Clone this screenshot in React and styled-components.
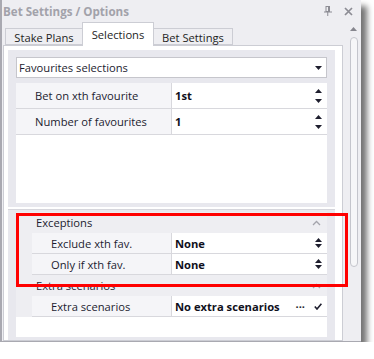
import React from 'react';
import styled, { createGlobalStyle } from 'styled-components';

const Global = createGlobalStyle`
  html, body { margin: 0; padding: 0; background: #ffffff; }
  body { font-family: "Open Sans", "Liberation Sans", sans-serif; font-size: 11.2px; color: #1c1c30; }
  * { box-sizing: border-box; }
`;

const Window = styled.div`
  position: relative;
  width: 361px;
  height: 342px;
  background: #eeeef2;
  border-left: 2px solid #a9a9b1;
  border-bottom: 1px solid #a9a9b1;
  box-shadow: 6px 6px 6px rgba(0, 0, 0, 0.55);
  display: flex;
  flex-direction: column;
`;

const TitleBar = styled.div`
  height: 22px;
  flex: none;
  display: flex;
  align-items: center;
  padding: 0 8px 0 1px;
  gap: 12px;
`;

const Title = styled.div`
  flex: 1;
  font-weight: 700;
  font-size: 11.6px;
  color: #a2a2aa;
  white-space: nowrap;
`;

const Body = styled.div`
  flex: 1;
  display: flex;
  min-height: 0;
`;

const TabControl = styled.div`
  margin-left: 1px;
  width: 340px;
  display: flex;
  flex-direction: column;
`;

const TabStrip = styled.div`
  height: 23px;
  flex: none;
  display: flex;
  align-items: flex-end;
  padding-left: 2px;
  position: relative;
  z-index: 1;
`;

const Tab = styled.div`
  height: ${p => (p.$active ? '24px' : '17px')};
  margin-bottom: ${p => (p.$active ? '-1px' : '0')};
  margin-left: -1px;
  width: ${p => p.$w}px;
  display: flex;
  align-items: center;
  justify-content: center;
  padding-top: ${p => (p.$active ? '0' : '1px')};
  background: ${p => (p.$active ? '#ffffff' : '#eeeef2')};
  border: 1px solid #cccdd4;
  border-bottom: ${p => (p.$active ? 'none' : '1px solid #cccdd4')};
  color: #1e1e1e;
  white-space: nowrap;
  &:first-child { margin-left: 0; }
`;

const TabPane = styled.div`
  flex: 1;
  background: #ffffff;
  border: 1px solid #cccdd4;
  padding: 4px 7px 0 4px;
  display: flex;
  flex-direction: column;
`;

const UpperSection = styled.div`
  background: #e8e8ee;
  padding: 7px 8px 4px 8px;
  display: flex;
  flex-direction: column;
  gap: 5px;
`;

const LowerSection = styled.div`
  flex: 1;
  margin-top: 2px;
  background: #e8e8ee;
  border-top: 1px solid #d6d6dc;
  padding: 2px 8px 3px 8px;
  display: flex;
  flex-direction: column;
`;

const Combo = styled.div`
  height: 21px;
  background: #ffffff;
  border: 1px solid #c6c6cc;
  display: flex;
  align-items: center;
  padding: 0 4px 0 2px;
  justify-content: space-between;
`;

const Grid = styled.div`
  background: #ffffff;
  display: flex;
  flex-direction: column;
  height: ${p => (p.$h ? `${p.$h}px` : 'auto')};
  flex: ${p => (p.$grow ? 1 : 'none')};
`;

const Row = styled.div`
  height: ${p => p.$h}px;
  display: grid;
  grid-template-columns: ${p => (p.$indent ? '16px 140px 1fr' : '156px 1fr')};
  background: #eeeef2;
`;

const LabelCell = styled.div`
  background: #f5f5f8;
  border-right: 1px solid #d8d8dd;
  border-bottom: 1px solid #d8d8dd;
  display: flex;
  align-items: center;
  padding-left: 19px;
  color: #1c1c30;
  white-space: nowrap;
`;

const ValueCell = styled.div`
  background: #ffffff;
  border-bottom: 1px solid #d8d8dd;
  display: flex;
  align-items: center;
  justify-content: space-between;
  padding: 0 5px 0 3px;
  font-weight: 700;
  color: #10101c;
  white-space: nowrap;
`;

const Indent = styled.div`
  background: #eeeef2;
`;

const CategoryRow = styled.div`
  height: 21px;
  background: #eeeef2;
  display: flex;
  align-items: center;
  justify-content: space-between;
  padding: 0 6px 0 20px;
  color: #1c1c30;
`;

const SpinBox = styled.div`
  display: flex;
  flex-direction: column;
  gap: ${p => p.$gap}px;
  align-items: center;
`;

const Trailing = styled.div`
  display: flex;
  align-items: center;
  gap: 9px;
`;

const ScrollBar = styled.div`
  width: 18px;
  flex: none;
  display: flex;
  flex-direction: column;
  align-items: center;
  padding: 5px 0 0 3px;
  gap: 6px;
`;

const Thumb = styled.div`
  width: 8px;
  height: 230px;
  border: 1px solid #c4c5cc;
  border-radius: 4px;
  background: #f6f6f8;
`;

const Highlight = styled.div`
  position: absolute;
  left: 14px;
  top: 213px;
  width: 332px;
  height: 74px;
  border: 3px solid #ff0000;
  pointer-events: none;
`;

const Tri = ({ up, color = '#1e1e2e', w = 7, h = 4 }) => (
  <svg width={w} height={h} viewBox={`0 0 ${w} ${h}`} style={{ display: 'block' }}>
    {up ? (
      <polygon points={`0,${h} ${w},${h} ${w / 2},0`} fill={color} />
    ) : (
      <polygon points={`0,0 ${w},0 ${w / 2},${h}`} fill={color} />
    )}
  </svg>
);

const Spin = ({ gap = 6 }) => (
  <SpinBox $gap={gap}>
    <Tri up />
    <Tri />
  </SpinBox>
);

const Caret = () => (
  <svg width="9" height="6" viewBox="0 0 9 6" style={{ display: 'block' }}>
    <polyline points="1,5 4.5,1.5 8,5" fill="none" stroke="#a4a4ac" strokeWidth="1.3" />
  </svg>
);

const Pin = () => (
  <svg width="8" height="10" viewBox="0 0 8 10" style={{ display: 'block' }}>
    <rect x="2" y="0.5" width="3.5" height="5" fill="none" stroke="#8c8c94" strokeWidth="1" />
    <rect x="4" y="0.5" width="1.5" height="5" fill="#8c8c94" />
    <line x1="0" y1="6" x2="8" y2="6" stroke="#8c8c94" strokeWidth="1" />
    <line x1="3.75" y1="6" x2="3.75" y2="10" stroke="#8c8c94" strokeWidth="1" />
  </svg>
);

const Close = () => (
  <svg width="9" height="9" viewBox="0 0 9 9" style={{ display: 'block' }}>
    <path d="M1 1 L8 8 M8 1 L1 8" stroke="#8c8c94" strokeWidth="1.7" />
  </svg>
);

const Check = () => (
  <svg width="8" height="7" viewBox="0 0 8 7" style={{ display: 'block' }}>
    <polyline points="0.8,3.5 3,6 7.4,0.8" fill="none" stroke="#1e1e2e" strokeWidth="1.6" />
  </svg>
);

const Dots = styled.span`
  font-weight: 700;
  color: #1e1e2e;
  font-size: 11px;
`;

export default function App() {
  return (
    <>
      <Global />
      <Window>
        <TitleBar>
          <Title>Bet Settings / Options</Title>
          <Pin />
          <Close />
        </TitleBar>
        <Body>
          <TabControl>
            <TabStrip>
              <Tab $w={78}>Stake Plans</Tab>
              <Tab $w={72} $active>Selections</Tab>
              <Tab $w={80}>Bet Settings</Tab>
            </TabStrip>
            <TabPane>
              <UpperSection>
                <Combo>
                  <span>Favourites selections</span>
                  <Tri />
                </Combo>
                <Grid $h={120}>
                  <Row $h={26}>
                    <LabelCell>Bet on xth favourite</LabelCell>
                    <ValueCell>
                      <span>1st</span>
                      <Spin gap={6} />
                    </ValueCell>
                  </Row>
                  <Row $h={26}>
                    <LabelCell>Number of favourites</LabelCell>
                    <ValueCell>
                      <span>1</span>
                      <Spin gap={6} />
                    </ValueCell>
                  </Row>
                </Grid>
              </UpperSection>
              <LowerSection>
                <Grid $grow>
                  <CategoryRow>
                    <span>Exceptions</span>
                    <Caret />
                  </CategoryRow>
                  <Row $h={21} $indent>
                    <Indent />
                    <LabelCell>Exclude xth fav.</LabelCell>
                    <ValueCell>
                      <span>None</span>
                      <Spin gap={2} />
                    </ValueCell>
                  </Row>
                  <Row $h={21} $indent>
                    <Indent />
                    <LabelCell>Only if xth fav.</LabelCell>
                    <ValueCell>
                      <span>None</span>
                      <Spin gap={2} />
                    </ValueCell>
                  </Row>
                  <CategoryRow>
                    <span>Extra scenarios</span>
                    <Caret />
                  </CategoryRow>
                  <Row $h={21} $indent>
                    <Indent />
                    <LabelCell>Extra scenarios</LabelCell>
                    <ValueCell>
                      <span>No extra scenarios</span>
                      <Trailing>
                        <Dots>···</Dots>
                        <Check />
                      </Trailing>
                    </ValueCell>
                  </Row>
                </Grid>
              </LowerSection>
            </TabPane>
          </TabControl>
          <ScrollBar>
            <Tri up color="#86868e" />
            <Thumb />
          </ScrollBar>
        </Body>
        <Highlight />
      </Window>
    </>
  );
}
